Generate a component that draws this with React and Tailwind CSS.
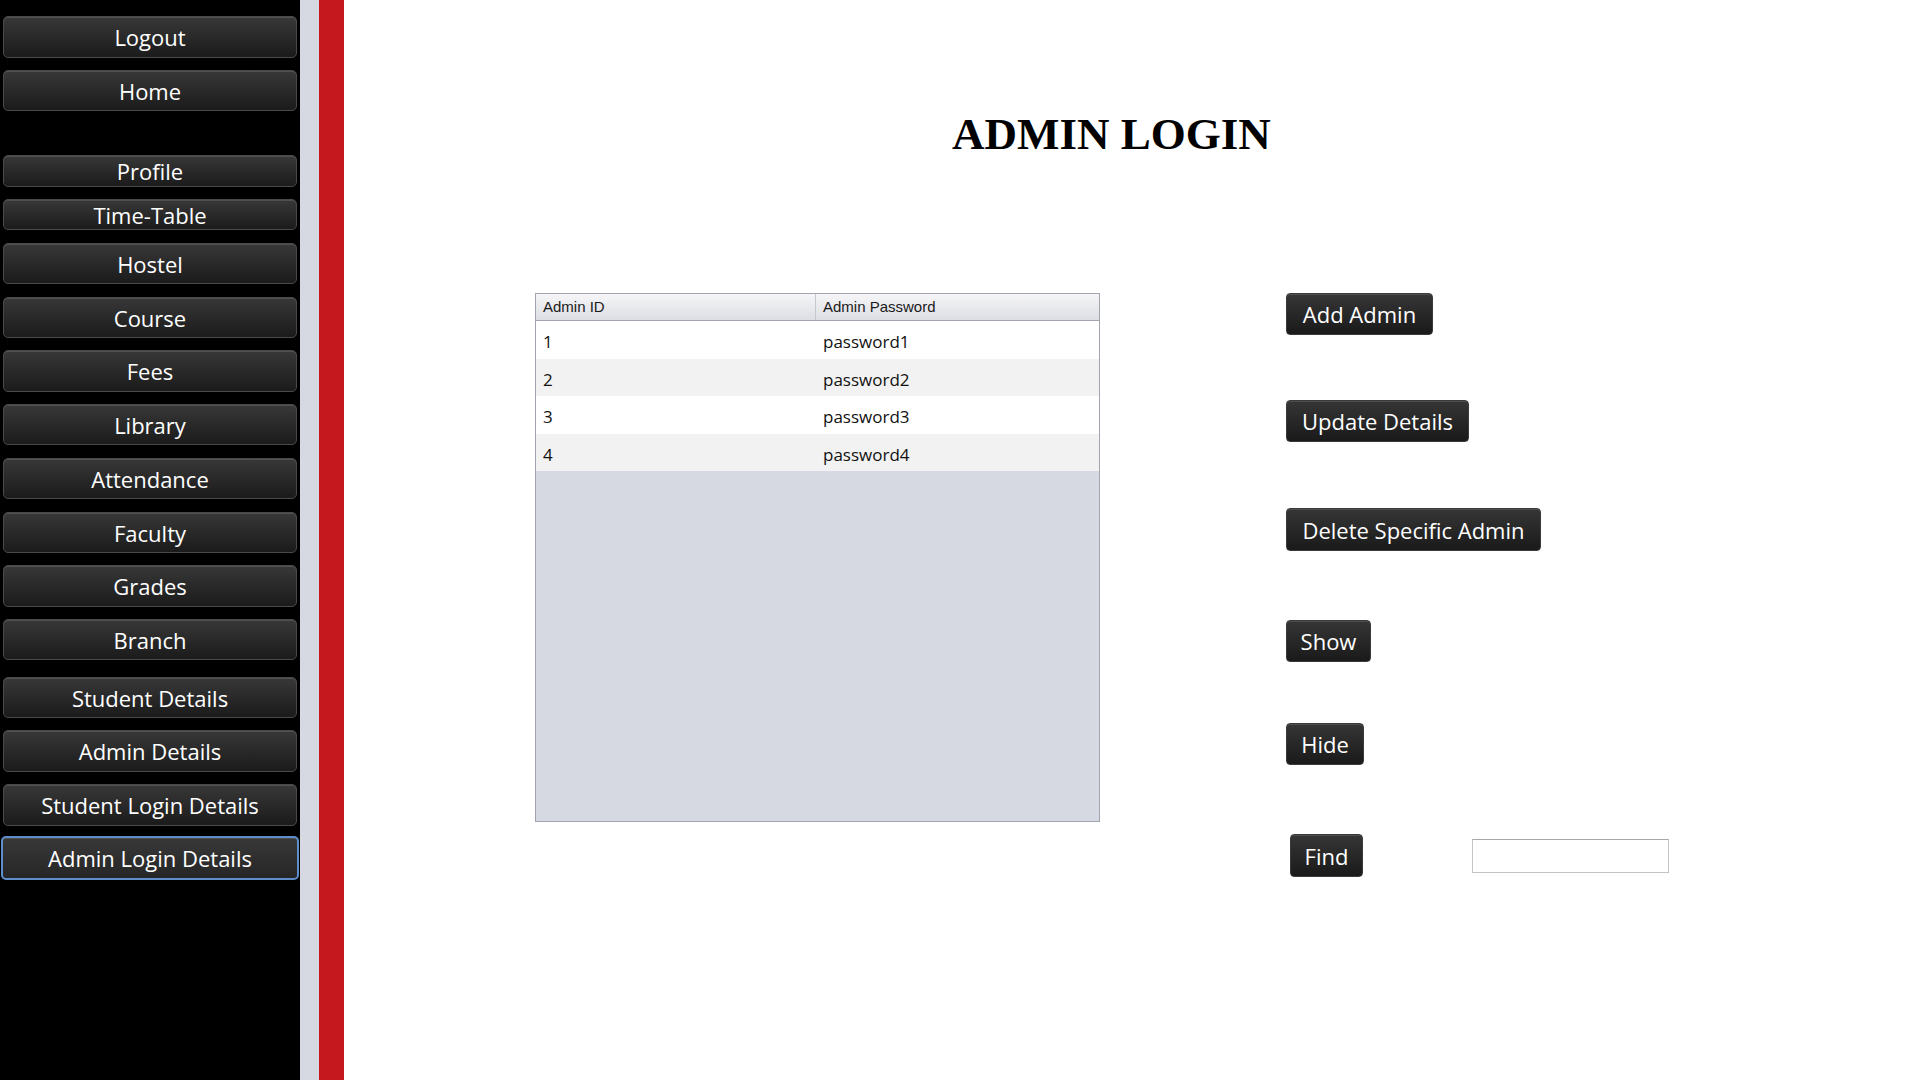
import React from 'react';

const navItems = [
  { label: 'Logout', box: 'mt-[16px] h-[42px]' },
  { label: 'Home', box: 'mt-[12px] h-[41px]' },
  { label: 'Profile', box: 'mt-[44px] h-[32px]' },
  { label: 'Time-Table', box: 'mt-[12px] h-[31px]' },
  { label: 'Hostel', box: 'mt-[13px] h-[41px]' },
  { label: 'Course', box: 'mt-[13px] h-[41px]' },
  { label: 'Fees', box: 'mt-[12px] h-[42px]' },
  { label: 'Library', box: 'mt-[12px] h-[41px]' },
  { label: 'Attendance', box: 'mt-[13px] h-[41px]' },
  { label: 'Faculty', box: 'mt-[13px] h-[41px]' },
  { label: 'Grades', box: 'mt-[12px] h-[42px]' },
  { label: 'Branch', box: 'mt-[12px] h-[41px]' },
  { label: 'Student Details', box: 'mt-[17px] h-[41px]' },
  { label: 'Admin Details', box: 'mt-[12px] h-[42px]' },
  { label: 'Student Login Details', box: 'mt-[12px] h-[42px]' },
];

const admins = [
  { id: 1, password: 'password1' },
  { id: 2, password: 'password2' },
  { id: 3, password: 'password3' },
  { id: 4, password: 'password4' },
];

const darkButton =
  'flex items-center justify-center rounded-[5px] border border-[#4a4a4a] bg-linear-to-b from-[#383838] to-[#1b1b1b] text-white font-["Open_Sans",sans-serif] text-[22px] leading-none shadow-[inset_0_1px_0_rgba(255,255,255,0.12)]';

const actionButton =
  'flex items-center justify-center rounded-[4px] border border-[#3a3a3a] bg-linear-to-b from-[#363636] to-[#1a1a1a] text-white font-["Open_Sans",sans-serif] text-[22px] leading-none h-[42px] shadow-[inset_0_1px_0_rgba(255,255,255,0.12)]';

const App = () => {
  return (
    <div className="flex h-[1080px] w-full overflow-hidden bg-white">
      <aside className="w-[300px] shrink-0 bg-black flex flex-col">
        {navItems.map((item) => (
          <button key={item.label} className={`${darkButton} ${item.box} ml-[3px] w-[294px]`}>
            {item.label}
          </button>
        ))}
        <button
          className={`${darkButton} mt-[10px] h-[44px] ml-[1px] w-[298px] border-2 border-[#5d8ec9] from-[#3c3c3c] to-[#262626]`}
        >
          Admin Login Details
        </button>
      </aside>

      <div className="w-[19px] shrink-0 bg-[#d6d9e1]" />
      <div className="w-[25px] shrink-0 bg-[#c5171e]" />

      <main className="flex-1 flex flex-col">
        <h1 className='pt-[112px] pl-[608px] font-["Liberation_Serif",serif] font-bold text-[45px] leading-none text-black'>
          ADMIN LOGIN
        </h1>

        <div className="flex mt-[136px] pl-[191px]">
          <div className="w-[565px] h-[529px] border border-[#a2a5ad] bg-[#d6d9e1] flex flex-col">
            <div className='flex h-[27px] border-b border-[#a2a5ad] bg-linear-to-b from-[#f6f6f8] to-[#dcdee4] font-["Liberation_Sans",sans-serif] text-[15px] text-[#1a1a1a]'>
              <div className="w-[280px] px-[7px] pt-[1px] flex items-center border-r border-[#c6c8ce]">Admin ID</div>
              <div className="flex-1 px-[7px] pt-[1px] flex items-center">Admin Password</div>
            </div>
            {admins.map((row, i) => (
              <div
                key={row.id}
                className={`flex h-[37.5px] items-center pt-[4px] font-["Open_Sans",sans-serif] text-[17px] text-[#111] ${
                  i % 2 === 0 ? 'bg-white' : 'bg-[#f2f2f2]'
                }`}
              >
                <div className="w-[280px] px-[7px]">{row.id}</div>
                <div className="flex-1 px-[7px]">{row.password}</div>
              </div>
            ))}
          </div>

          <div className="ml-[186px] flex flex-col">
            <button className={`${actionButton} w-[147px]`}>Add Admin</button>
            <button className={`${actionButton} mt-[65px] w-[183px]`}>Update Details</button>
            <button className={`${actionButton} mt-[66px] w-[255px] h-[43px]`}>Delete Specific Admin</button>
            <button className={`${actionButton} mt-[69px] w-[85px]`}>Show</button>
            <button className={`${actionButton} mt-[61px] w-[78px]`}>Hide</button>
            <div className="mt-[69px] flex items-center">
              <button className={`${actionButton} ml-[4px] w-[73px] h-[43px]`}>Find</button>
              <input
                type="text"
                className="ml-[109px] w-[197px] h-[34px] border border-[#c4c4c4] border-t-[#a8a8a8] bg-white outline-none"
              />
            </div>
          </div>
        </div>
      </main>
    </div>
  );
};

export default App;
